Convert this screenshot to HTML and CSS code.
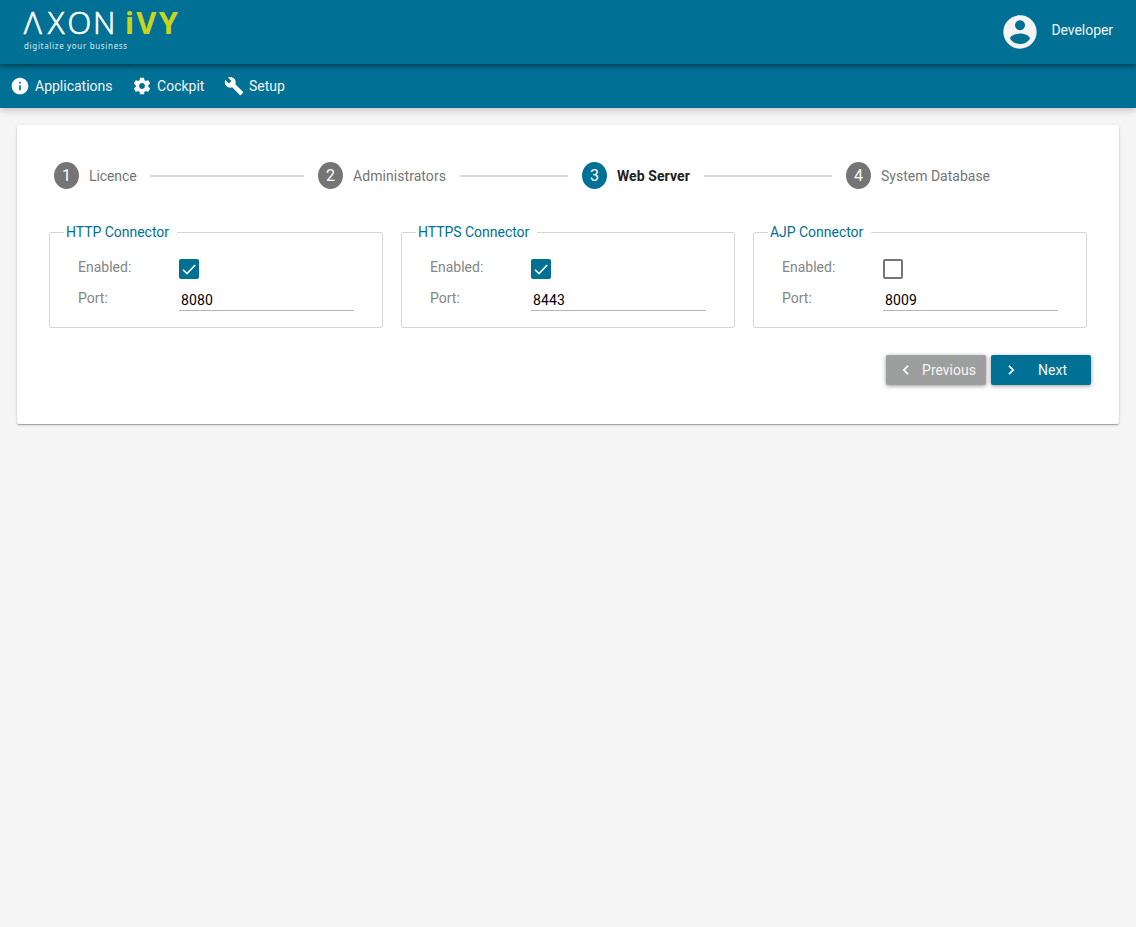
FILE: index.html
```html
<!DOCTYPE html>
<html lang="en">
<head>
<meta charset="utf-8">
<title>Setup</title>
<link rel="stylesheet" href="styles.css">
</head>
<body>
<header class="topbar">
  <div class="logo">
    <svg class="wordmark" width="170" height="36" viewBox="0 0 170 36">
      <text class="logo-axon" y="33.5" x="-0.2 23.8 43.4 69">ΛXON</text>
      <text class="logo-ivy" y="33.5" x="100.800 112.300 134.800">iVY</text>
    </svg>
    <div class="logo-tag">digitalize your business</div>
  </div>
  <div class="user">
    <svg class="avatar" width="40" height="40" viewBox="0 0 24 24"><path d="M12 2C6.480 2 2 6.480 2 12s4.480 10 10 10 10-4.480 10-10S17.520 2 12 2zm0 3c1.660 0 3 1.340 3 3s-1.340 3-3 3-3-1.340-3-3 1.340-3 3-3zm0 14.200c-2.500 0-4.710-1.280-6-3.220.030-1.990 4-3.080 6-3.080 1.990 0 5.970 1.090 6 3.080-1.290 1.940-3.500 3.220-6 3.220z"/></svg>
    <span class="user-name">Developer</span>
  </div>
</header>
<nav class="menu">
  <a class="menu-item"><svg class="icon" viewBox="0 0 24 24"><path d="M12 2C6.480 2 2 6.480 2 12s4.480 10 10 10 10-4.480 10-10S17.520 2 12 2zm1 15h-2v-6h2v6zm0-8h-2V7h2v2z"/></svg>Applications</a>
  <a class="menu-item"><svg class="icon" viewBox="0 0 24 24"><path d="M19.430 12.980c.040-.320.070-.640.070-.980s-.030-.660-.070-.980l2.110-1.650c.190-.150.240-.420.120-.640l-2-3.460c-.120-.220-.390-.300-.610-.220l-2.490 1c-.520-.400-1.080-.730-1.690-.980l-.380-2.650C14.460 2.180 14.250 2 14 2h-4c-.250 0-.460.180-.490.420l-.380 2.650c-.610.250-1.170.590-1.690.980l-2.490-1c-.230-.090-.490 0-.610.220l-2 3.460c-.130.220-.070.490.120.640l2.110 1.650c-.040.320-.070.650-.070.980s.030.660.070.980l-2.110 1.650c-.190.150-.240.420-.120.640l2 3.460c.120.220.390.300.610.220l2.490-1c.520.400 1.080.730 1.690.980l.380 2.650c.030.240.240.420.490.420h4c.250 0 .460-.180.490-.420l.380-2.650c.610-.250 1.170-.590 1.690-.980l2.490 1c.230.090.490 0 .610-.220l2-3.460c.120-.220.070-.490-.120-.640l-2.110-1.650zM12 15.500c-1.930 0-3.500-1.570-3.500-3.500s1.570-3.500 3.500-3.500 3.500 1.570 3.500 3.500-1.570 3.500-3.500 3.500z"/></svg>Cockpit</a>
  <a class="menu-item"><svg class="icon" viewBox="0 0 24 24"><path d="M22.700 19l-9.100-9.100c.900-2.300.400-5-1.500-6.900-2-2-5-2.400-7.400-1.300L9 6 6 9 1.600 4.700C.400 7.100.900 10.100 2.900 12.100c1.900 1.900 4.600 2.400 6.900 1.500l9.100 9.100c.400.400 1 .400 1.400 0l2.300-2.300c.500-.400.500-1.100.100-1.400z"/></svg>Setup</a>
</nav>
<main class="card">
  <ol class="steps">
    <li class="step"><span class="step-number">1</span><span class="step-title tight">Licence</span><span class="step-line"></span></li>
    <li class="step"><span class="step-number">2</span><span class="step-title wide">Administrators</span><span class="step-line"></span></li>
    <li class="step active"><span class="step-number">3</span><span class="step-title">Web Server</span><span class="step-line"></span></li>
    <li class="step"><span class="step-number">4</span><span class="step-title">System Database</span></li>
  </ol>
  <div class="connectors">
    <fieldset class="connector">
      <legend>HTTP Connector</legend>
      <div class="row"><span class="label">Enabled:</span><span class="check checked"><svg viewBox="0 0 20 20"><path d="M4 10.800L8 14.600L16.200 5.900"/></svg></span></div>
      <div class="row"><span class="label">Port:</span><span class="field">8080</span></div>
    </fieldset>
    <fieldset class="connector">
      <legend>HTTPS Connector</legend>
      <div class="row"><span class="label">Enabled:</span><span class="check checked"><svg viewBox="0 0 20 20"><path d="M4 10.800L8 14.600L16.200 5.900"/></svg></span></div>
      <div class="row"><span class="label">Port:</span><span class="field">8443</span></div>
    </fieldset>
    <fieldset class="connector">
      <legend>AJP Connector</legend>
      <div class="row"><span class="label">Enabled:</span><span class="check"></span></div>
      <div class="row"><span class="label">Port:</span><span class="field">8009</span></div>
    </fieldset>
  </div>
  <div class="actions">
    <button class="button previous"><svg viewBox="0 0 20 20"><path d="M12 5.800L7.800 10L12 14.200"/></svg><span>Previous</span></button>
    <button class="button next"><svg viewBox="0 0 20 20"><path d="M8 5.800L12.200 10L8 14.200"/></svg><span>Next</span></button>
  </div>
</main>
</body>
</html>
```
FILE: styles.css
```css
* { box-sizing: border-box; }
body {
  margin: 0;
  min-height: 100vh;
  background: #f5f5f5;
  font: 14px/20px Roboto, sans-serif;
  color: #757575;
}
.topbar {
  position: relative;
  z-index: 2;
  display: flex;
  justify-content: space-between;
  height: 64px;
  padding: 0 24px;
  background: #007095;
  box-shadow: 0 2px 5px rgba(0,0,0,.5);
}
.logo { font-family: "Open Sans", sans-serif; }
.wordmark { display: block; overflow: visible; }
.logo-axon { font-size: 31px; font-weight: 300; fill: #fff; stroke: #fff; stroke-width: .7px; }
.logo-ivy { font-size: 31px; font-weight: 700; fill: #c8d41e; }
.logo-tag { margin-top: 4px; font-family: "Noto Sans", sans-serif; font-size: 8px; line-height: 12px; letter-spacing: .66px; color: #dcebf0; }
.user { display: flex; align-items: flex-start; gap: 11px; margin-right: -1px; color: #f4f4f4; }
.avatar { margin-top: 12px; fill: #f4f4f4; }
.user-name { margin-top: 20px; letter-spacing: -.06px; }
.menu {
  position: relative;
  z-index: 1;
  display: flex;
  align-items: center;
  gap: 19.500px;
  height: 44px;
  padding: 0 10px;
  background: #007095;
  color: #f4f4f4;
  box-shadow: 0 1px 8px rgba(0,0,0,.28);
}
.menu-item { display: flex; align-items: center; gap: 5px; }
.icon { width: 20px; height: 20px; fill: #fff; }
.card {
  height: 299px;
  margin: 17px;
  padding: 37px 32px 0;
  background: #fff;
  border-radius: 2px;
  box-shadow: 0 1px 3px rgba(0,0,0,.2), 0 1px 1px rgba(0,0,0,.14), 0 2px 1px -1px rgba(0,0,0,.12);
}
.steps {
  display: grid;
  grid-template-columns: repeat(4, 264px);
  height: 27px;
  margin: 0 -18px 0 5px;
  padding: 0;
  list-style: none;
}
.step { display: flex; align-items: center; padding-right: 14px; }
.step-number {
  width: 25px;
  height: 27px;
  border-radius: 50%;
  background: #757575;
  color: #fff;
  font-size: 16px;
  line-height: 27px;
  text-align: center;
}
.step-title { margin-left: 10px; }
.tight { letter-spacing: -.1px; }
.wide { letter-spacing: .06px; }
.step-line { flex: 1; height: 2px; margin-left: 14px; background: #d9d9d9; }
.active .step-number { background: #007095; }
.active .step-title { color: #212121; font-weight: 700; letter-spacing: .08px; }
.connectors { display: grid; grid-template-columns: repeat(3, 334px); gap: 18px; margin-top: 33px; }
.connector {
  min-width: 0;
  height: 106px;
  margin: 0;
  padding: 15px 28px 0;
  border: 1px solid #d5d5d5;
  border-radius: 2px;
}
.connector legend { margin-left: -14px; padding: 0 8px 0 2px; color: #007095; letter-spacing: -.03px; }
.row { display: flex; align-items: flex-start; height: 31px; }
.label { width: 101px; color: #858585; }
.check {
  width: 20px;
  height: 20px;
  margin-top: 2px;
  border: 2px solid #757575;
  border-radius: 2px;
}
.checked { border: 0; background: #007095; }
.check svg { display: block; fill: none; stroke: #fff; stroke-width: 1.500px; }
.field {
  width: 175px;
  height: 23px;
  padding: 2px 2px 0;
  border-bottom: 1px solid #b5b5b5;
  color: #000;
  letter-spacing: .12px;
}
.actions { display: flex; justify-content: flex-end; gap: 5px; margin: 27px -4px 0 0; }
.button {
  display: flex;
  align-items: center;
  width: 100px;
  height: 30px;
  padding: 0 0 0 10px;
  border: 0;
  border-radius: 2px;
  background: #007095;
  color: #f4f4f4;
  font: inherit;
  box-shadow: 0 1px 4px rgba(0,0,0,.4);
}
.button svg { width: 20px; fill: none; stroke: #fff; stroke-width: 1.700px; }
.button span { width: 66px; text-align: center; }
.next span { width: 63px; }
.previous { background: #9d9f9e; }
```
